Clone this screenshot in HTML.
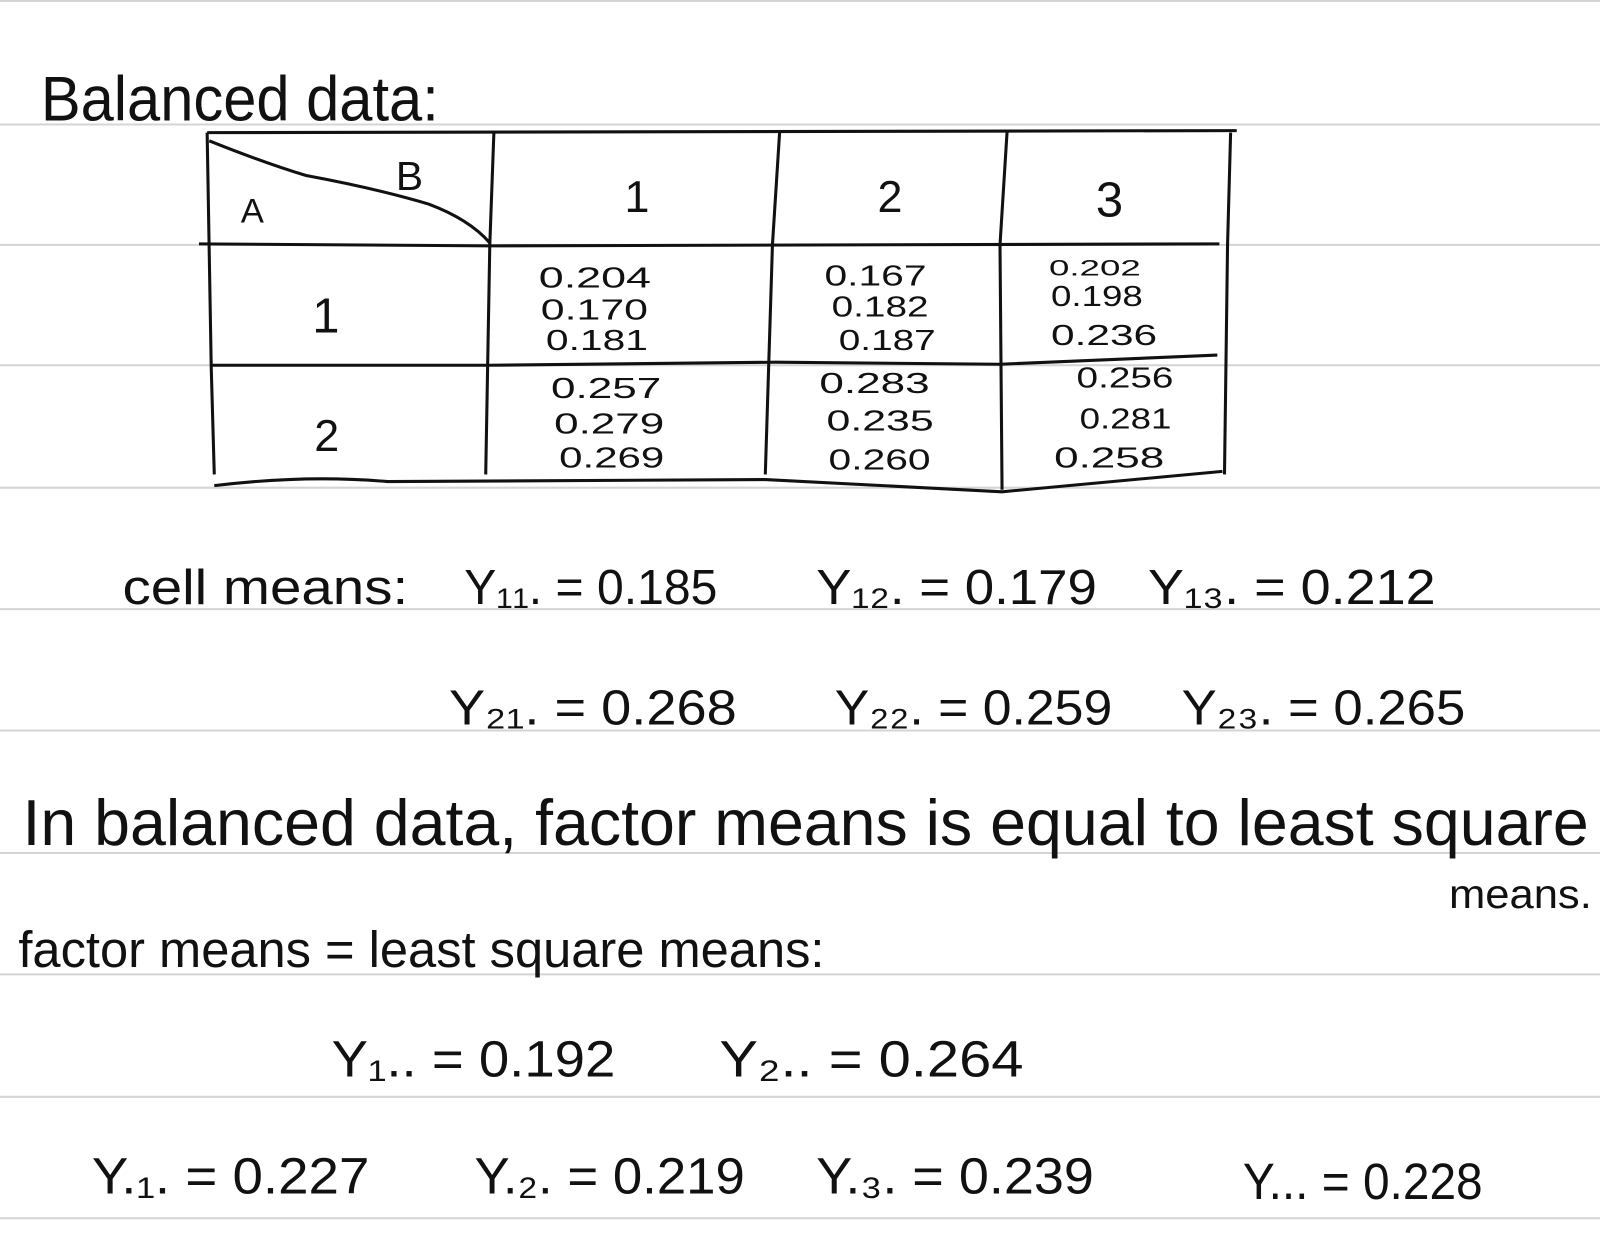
<!DOCTYPE html>
<html><head><meta charset="utf-8"><style>
html,body{margin:0;padding:0;background:#fff;width:1600px;height:1257px;overflow:hidden}
svg{display:block}
text{font-family:"Liberation Sans",sans-serif;fill:#111}
</style></head><body>
<svg width="1600" height="1257" viewBox="0 0 1568 1232" preserveAspectRatio="none" xmlns="http://www.w3.org/2000/svg">
<g stroke="#d4d4d4" stroke-width="2">
<line x1="0" y1="1" x2="1568" y2="1"/>
<line x1="0" y1="122" x2="1568" y2="122"/>
<line x1="0" y1="240" x2="1568" y2="240"/>
<line x1="0" y1="358" x2="1568" y2="358"/>
<line x1="0" y1="478" x2="1568" y2="478"/>
<line x1="0" y1="597" x2="1568" y2="597"/>
<line x1="0" y1="716" x2="1568" y2="716"/>
<line x1="0" y1="836" x2="1568" y2="836"/>
<line x1="0" y1="955" x2="1568" y2="955"/>
<line x1="0" y1="1075" x2="1568" y2="1075"/>
<line x1="0" y1="1194" x2="1568" y2="1194"/>
</g>
<g stroke="#111" stroke-width="3" fill="none">
<path d="M203 130 L1212 128"/>
<path d="M203 130 L207 360 L210 465"/>
<path d="M484 130 L480 240 L476 465"/>
<path d="M764 130 L757 240 L750 465"/>
<path d="M987 128 L980 240 L982 480"/>
<path d="M1206 130 L1203 240 L1200 465"/>
<path d="M195 239 L480 241 L1195 239"/>
<path d="M207 358 L480 358 L760 355 L980 357 L1193 348"/>
<path d="M210 476 Q300 465 380 472 L750 470 L982 482 L1198 462"/>
<path d="M205 138 Q260 160 300 172 Q370 185 420 200 Q460 215 480 238"/>
</g>
<text x="40" y="118" font-size="62" textLength="390" lengthAdjust="spacingAndGlyphs">Balanced data:</text>
<text x="388" y="186" font-size="40">B</text>
<text x="236" y="218" font-size="34">A</text>
<text x="612" y="208" font-size="44">1</text>
<text x="860" y="208" font-size="44">2</text>
<text x="1074" y="212" font-size="48">3</text>
<text x="306" y="326" font-size="48">1</text>
<text x="308" y="442" font-size="44">2</text>
<g font-size="28">
<text x="528" y="282" textLength="110" lengthAdjust="spacingAndGlyphs">0.204</text>
<text x="530" y="313" textLength="105" lengthAdjust="spacingAndGlyphs">0.170</text>
<text x="535" y="343" textLength="100" lengthAdjust="spacingAndGlyphs">0.181</text>
<text x="808" y="280" textLength="100" lengthAdjust="spacingAndGlyphs">0.167</text>
<text x="815" y="310" textLength="95" lengthAdjust="spacingAndGlyphs">0.182</text>
<text x="822" y="343" textLength="95" lengthAdjust="spacingAndGlyphs">0.187</text>
<text x="1028" y="270" font-size="22" textLength="90" lengthAdjust="spacingAndGlyphs">0.202</text>
<text x="1030" y="300" textLength="90" lengthAdjust="spacingAndGlyphs">0.198</text>
<text x="1030" y="338" textLength="104" lengthAdjust="spacingAndGlyphs">0.236</text>
<text x="540" y="390" textLength="108" lengthAdjust="spacingAndGlyphs">0.257</text>
<text x="543" y="425" textLength="108" lengthAdjust="spacingAndGlyphs">0.279</text>
<text x="548" y="458" textLength="103" lengthAdjust="spacingAndGlyphs">0.269</text>
<text x="803" y="385" textLength="108" lengthAdjust="spacingAndGlyphs">0.283</text>
<text x="810" y="422" textLength="105" lengthAdjust="spacingAndGlyphs">0.235</text>
<text x="812" y="460" textLength="100" lengthAdjust="spacingAndGlyphs">0.260</text>
<text x="1055" y="380" textLength="95" lengthAdjust="spacingAndGlyphs">0.256</text>
<text x="1058" y="420" textLength="90" lengthAdjust="spacingAndGlyphs">0.281</text>
<text x="1033" y="458" textLength="108" lengthAdjust="spacingAndGlyphs">0.258</text>
</g>
<g font-size="48">
<text x="120" y="592" textLength="280" lengthAdjust="spacingAndGlyphs">cell means:</text>
<text x="455" y="592" textLength="248" lengthAdjust="spacingAndGlyphs">Y₁₁. = 0.185</text>
<text x="800" y="592" textLength="275" lengthAdjust="spacingAndGlyphs">Y₁₂. = 0.179</text>
<text x="1125" y="592" textLength="282" lengthAdjust="spacingAndGlyphs">Y₁₃. = 0.212</text>
<text x="440" y="710" textLength="282" lengthAdjust="spacingAndGlyphs">Y₂₁. = 0.268</text>
<text x="818" y="710" textLength="272" lengthAdjust="spacingAndGlyphs">Y₂₂. = 0.259</text>
<text x="1158" y="710" textLength="278" lengthAdjust="spacingAndGlyphs">Y₂₃. = 0.265</text>
</g>
<text x="22" y="828" font-size="64" textLength="1535" lengthAdjust="spacingAndGlyphs">In balanced data, factor means is equal to least square</text>
<text x="1420" y="890" font-size="40" textLength="140" lengthAdjust="spacingAndGlyphs">means.</text>
<text x="18" y="948" font-size="50" textLength="790" lengthAdjust="spacingAndGlyphs">factor means = least square means:</text>
<g font-size="50">
<text x="325" y="1055" textLength="278" lengthAdjust="spacingAndGlyphs">Y₁.. = 0.192</text>
<text x="705" y="1055" textLength="298" lengthAdjust="spacingAndGlyphs">Y₂.. = 0.264</text>
<text x="90" y="1170" textLength="272" lengthAdjust="spacingAndGlyphs">Y.₁. = 0.227</text>
<text x="465" y="1170" textLength="265" lengthAdjust="spacingAndGlyphs">Y.₂. = 0.219</text>
<text x="800" y="1170" textLength="272" lengthAdjust="spacingAndGlyphs">Y.₃. = 0.239</text>
<text x="1218" y="1175" textLength="235" lengthAdjust="spacingAndGlyphs">Y... = 0.228</text>
</g>
</svg>
</body></html>
